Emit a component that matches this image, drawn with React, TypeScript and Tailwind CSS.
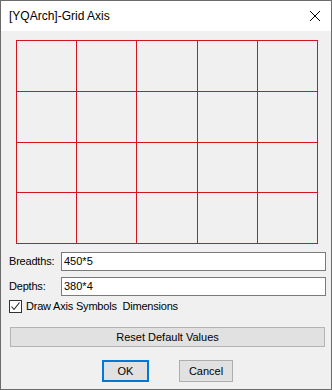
const cells = Array.from({ length: 20 });

export default function App() {
  return (
    <div
      className="w-[332px] h-[390px] border border-[#6b6b6b] bg-[#f0f0f0] flex flex-col text-[11px] text-black overflow-hidden"
      style={{ fontFamily: '"Liberation Sans", Arial, sans-serif' }}
    >
      {/* title bar */}
      <div className="h-[30px] bg-white flex items-center justify-between pl-[8px] pr-[9px] shrink-0">
        <span className="text-[12px] leading-none">[YQArch]-Grid Axis</span>
        <svg width="12" height="12" viewBox="0 0 12 12" className="mr-[1px]">
          <path d="M1 1 L11 11 M11 1 L1 11" stroke="#000" strokeWidth="1" />
        </svg>
      </div>

      {/* axis preview */}
      <div className="ml-[15px] mt-[9px] w-[302px] h-[204px] grid grid-cols-5 grid-rows-4 border-l border-t border-[#d0161f]">
        {cells.map((_, i) => (
          <div key={i} className="border-r border-b border-[#d0161f]" />
        ))}
      </div>

      <div className="flex items-center mt-[8px]">
        <span className="w-[60px] shrink-0 pl-[8px] tracking-[-0.2px]">Breadths:</span>
        <div className="w-[265px] h-[19px] bg-white border border-[#7a7a7a] flex items-center pl-[2px]">450*5</div>
      </div>
      <div className="flex items-center mt-[6px]">
        <span className="w-[60px] shrink-0 pl-[8px] tracking-[-0.2px]">Depths:</span>
        <div className="w-[265px] h-[19px] bg-white border border-[#7a7a7a] flex items-center pl-[2px]">380*4</div>
      </div>

      <div className="flex items-center mt-[3px] ml-[8px] h-[15px]">
        <div className="w-[13px] h-[13px] border border-[#333] bg-white flex items-center justify-center shrink-0">
          <svg width="11" height="11" viewBox="0 0 11 11">
            <path d="M1.5 5.5 L4 8.5 L9.5 1.5" stroke="#222" strokeWidth="1.1" fill="none" />
          </svg>
        </div>
        <span className="ml-[4px] tracking-[-0.2px]">Draw Axis Symbols&nbsp; Dimensions</span>
      </div>

      <button className="ml-[9px] mt-[13px] w-[315px] h-[20px] bg-[#e1e1e1] border border-[#b4b4b4] flex items-center justify-center">
        Reset Default Values
      </button>

      <div className="flex mt-[13px] ml-[101px] gap-[30px]">
        <button className="w-[47px] h-[22px] bg-[#e1e1e1] border-2 border-[#0078d7] flex items-center justify-center">OK</button>
        <button className="w-[54px] h-[22px] bg-[#e1e1e1] border border-[#adadad] flex items-center justify-center">Cancel</button>
      </div>
    </div>
  );
}
